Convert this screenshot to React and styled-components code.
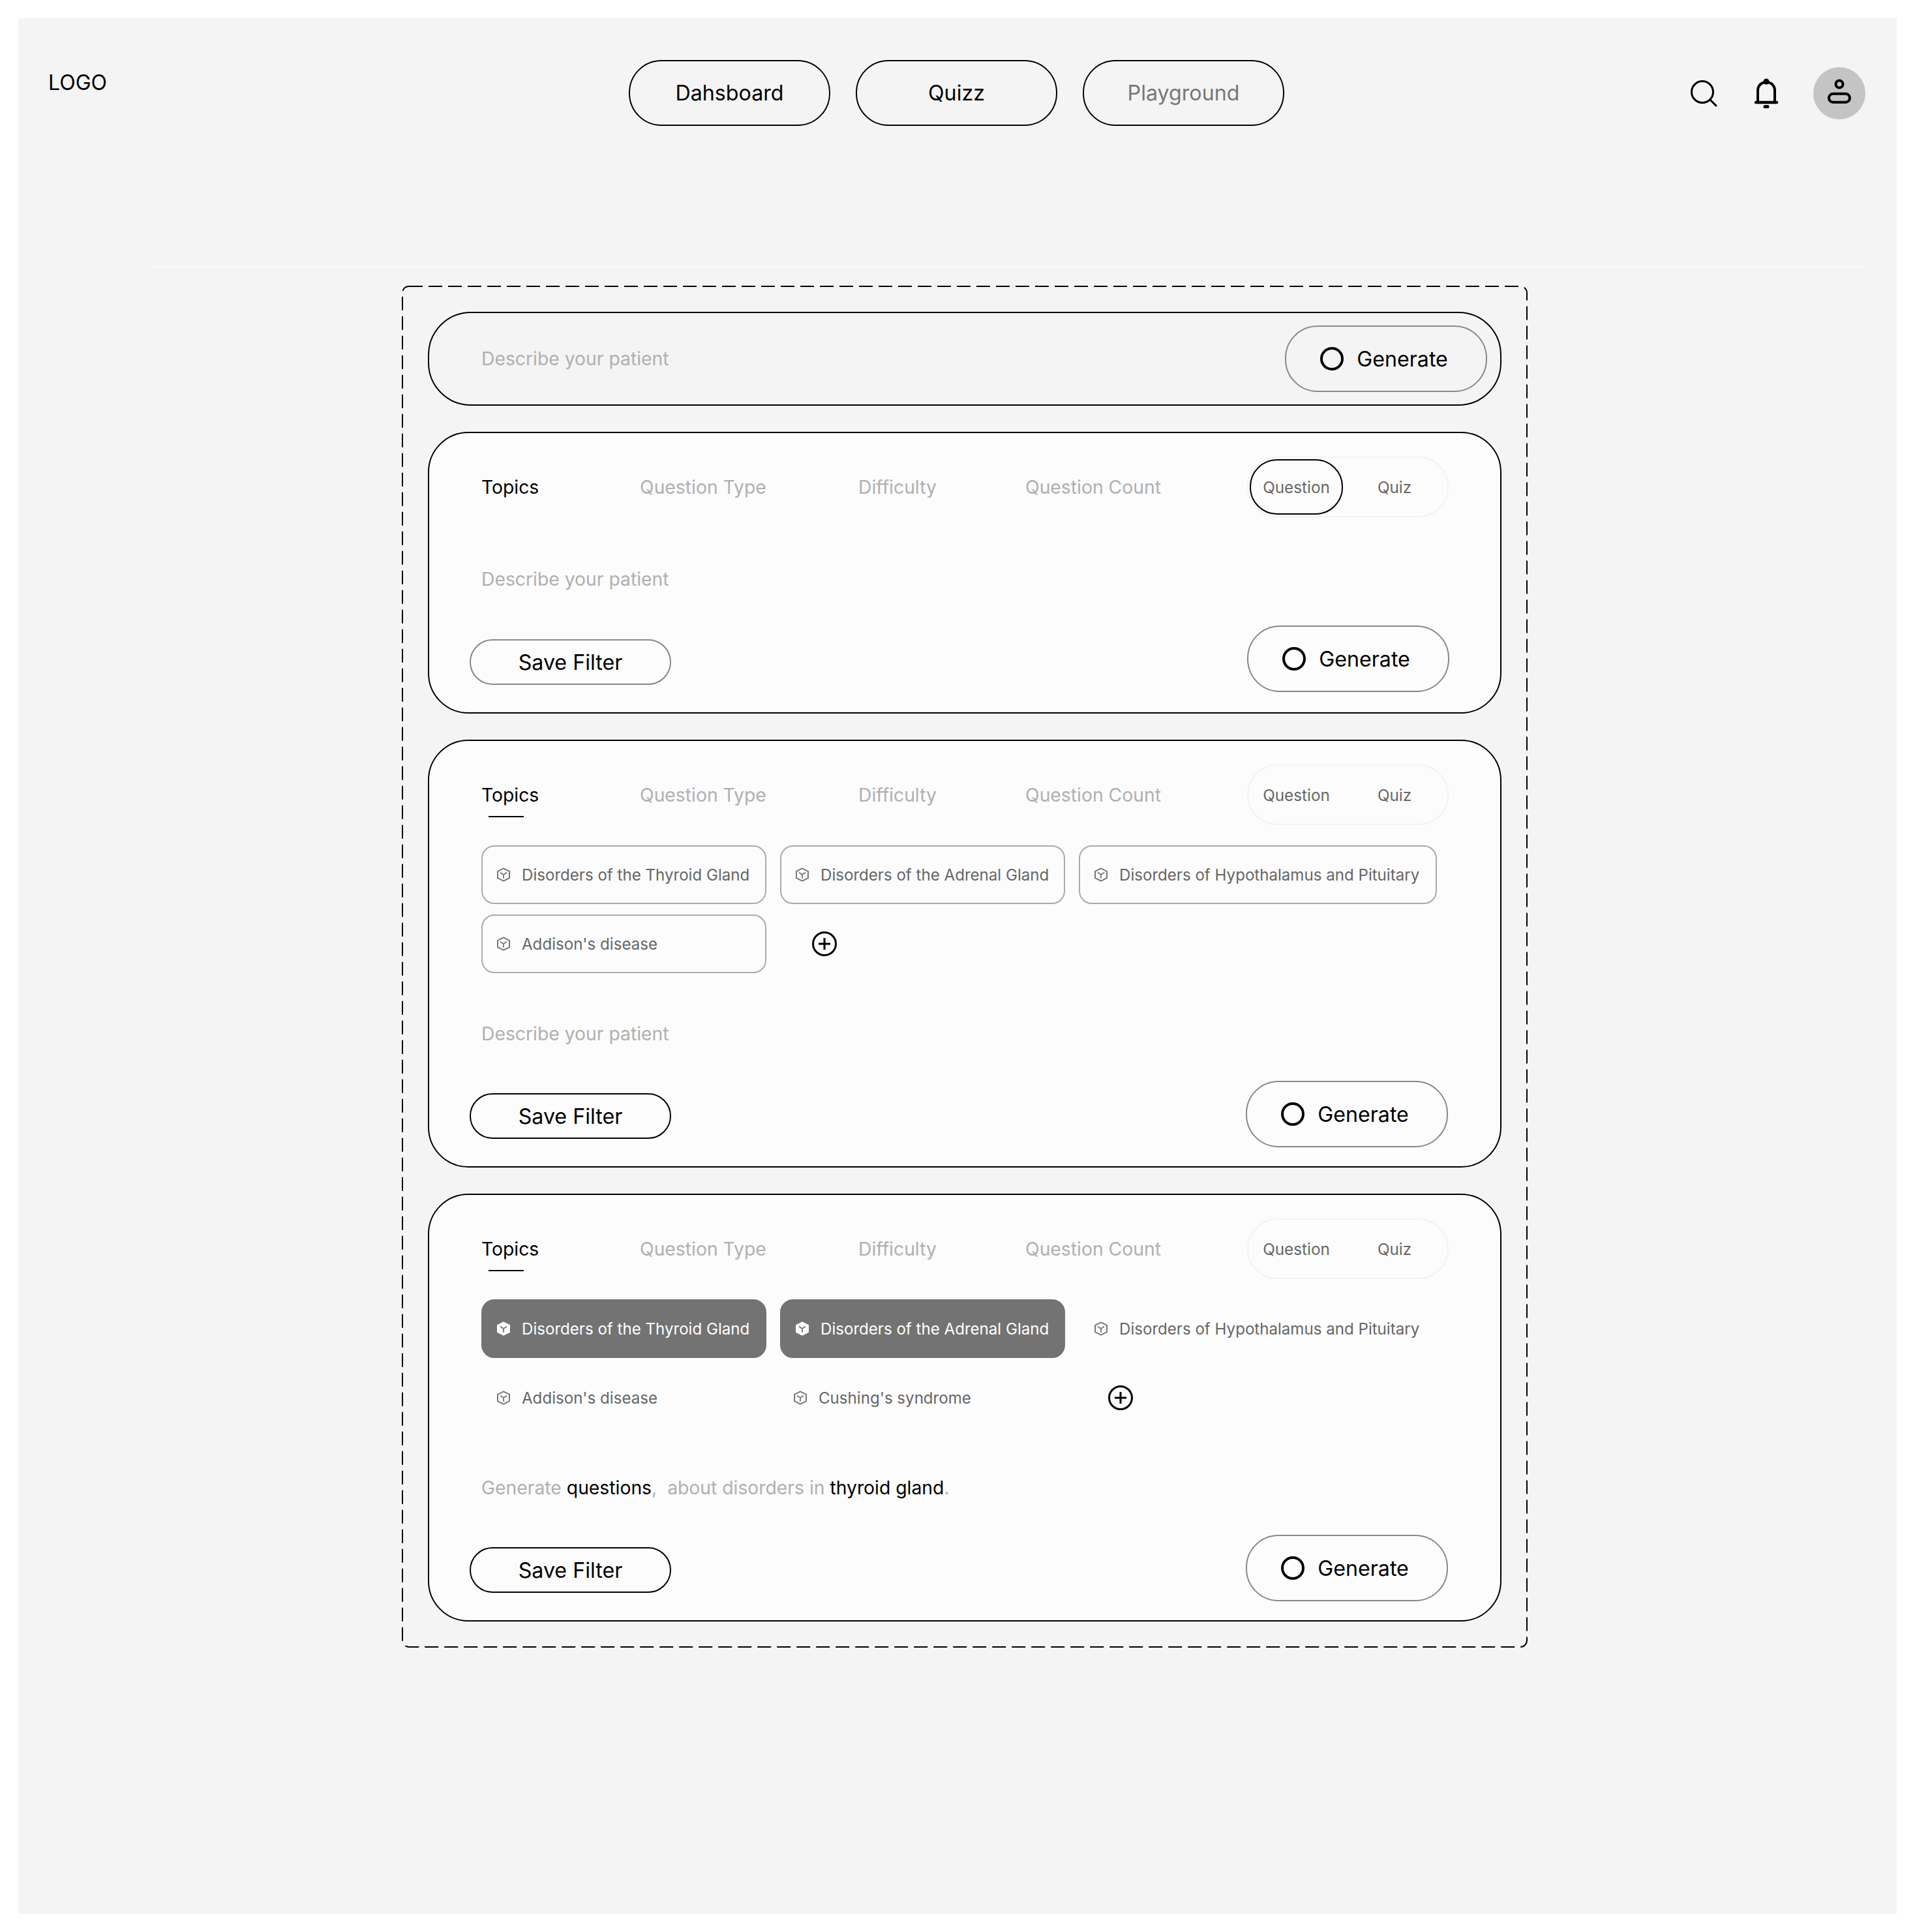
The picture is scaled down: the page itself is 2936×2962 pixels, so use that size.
import React from "react";
import styled, { createGlobalStyle } from "styled-components";

const Global = createGlobalStyle`
  html, body { margin: 0; padding: 0; background: #fff; }
  body { font-family: Inter, "Liberation Sans", sans-serif; color: #000; }
  * { box-sizing: border-box; }
`;

const Page = styled.div`
  padding: 28px;
  width: 2936px;
  height: 2962px;
`;

const Panel = styled.div`
  width: 2880px;
  height: 2906px;
  background: #f4f4f4;
  display: flex;
  flex-direction: column;
`;

const Header = styled.header`
  display: grid;
  grid-template-columns: 890px auto 1fr;
  align-items: start;
  padding: 64px 48px 0 46px;
  height: 380px;
`;

const Logo = styled.div`
  font-size: 32px;
  line-height: 40px;
  margin-top: 15px;
  font-weight: 400;
`;

const Nav = styled.nav`
  display: flex;
  gap: 39px;
`;

const NavPill = styled.div`
  width: 309px;
  height: 101px;
  border: 2px solid #000;
  border-radius: 50px;
  display: flex;
  align-items: center;
  justify-content: center;
  font-size: 32.2px;
  font-weight: 430;
  color: ${(p) => (p.$muted ? "#777" : "#000")};
`;

const HeaderIcons = styled.div`
  display: flex;
  justify-content: flex-end;
  align-items: center;
  height: 101px;
`;

const SearchGlyph = styled.svg`
  width: 42px;
  height: 42px;
  margin-right: 55px;
`;

const BellGlyph = styled.svg`
  width: 40px;
  height: 50px;
  margin-right: 52px;
`;

const Avatar = styled.div`
  width: 80px;
  height: 80px;
  border-radius: 50%;
  background: #c4c4c4;
  display: flex;
  align-items: center;
  justify-content: center;
`;

const Divider = styled.div`
  height: 2px;
  margin: 0 48px 0 204px;
  background: #fcfcfc;
`;

const Frame = styled.section`
  position: relative;
  width: 1726px;
  margin: 28px 0 0 588px;
  padding: 40px;
  display: flex;
  flex-direction: column;
  gap: 40px;
`;

const FrameDash = styled.svg`
  position: absolute;
  inset: 0;
  width: 100%;
  height: 100%;
  pointer-events: none;
  overflow: visible;
`;

const PromptBar = styled.div`
  height: 144px;
  border: 2px solid #000;
  border-radius: 66px;
  display: flex;
  align-items: center;
  justify-content: space-between;
  padding: 0 20px 0 80px;
`;

const Card = styled.div`
  border: 2px solid #000;
  border-radius: 62px;
  background: #fcfcfc;
  padding: 36px 79px ${(p) => p.$bottom}px 62px;
`;

const Tabs = styled.div`
  display: grid;
  grid-template-columns: 243px 335px 256px 340px 308px;
  align-items: center;
  margin-left: 18px;
  height: 93px;
`;

const Tab = styled.div`
  position: relative;
  font-size: 28.3px;
  line-height: 36px;
  font-weight: ${(p) => (p.$active ? 420 : 400)};
  color: ${(p) => (p.$active ? "#000" : "#b0b0b0")};
`;

const TabMark = styled.span`
  position: absolute;
  left: 11px;
  top: 50px;
  width: 54px;
  height: 2px;
  background: #000;
`;

const Toggle = styled.div`
  width: 309px;
  height: 93px;
  border: 2px solid #f3f3f3;
  border-radius: 46px;
  padding: 2px;
  display: grid;
  grid-template-columns: 143px 1fr;
`;

const ToggleOption = styled.div`
  border: 2px solid ${(p) => (p.$on ? "#000" : "transparent")};
  border-radius: 42px;
  display: flex;
  align-items: center;
  justify-content: center;
  font-size: 24.3px;
  color: #666;
`;

const ChipRows = styled.div`
  margin: 31px 0 0 18px;
  display: flex;
  flex-direction: column;
  gap: 16px;
`;

const ChipRow = styled.div`
  display: flex;
  align-items: center;
  gap: 21px;
`;

const Chip = styled.div`
  width: ${(p) => p.$w}px;
  height: 90px;
  border-radius: 20px;
  display: flex;
  align-items: center;
  gap: 16px;
  padding: 0 0 0 ${(p) => p.$left || 20}px;
  font-size: 24.1px;
  white-space: nowrap;
  color: ${(p) => (p.$on ? "#fff" : "#666")};
  background: ${(p) => (p.$on ? "#737373" : p.$ghost ? "#fdfdfd" : "transparent")};
  border: 2px solid ${(p) => (p.$on ? "#737373" : p.$ghost ? "transparent" : "#aaa")};
  svg {
    flex-shrink: 0;
  }
`;

const AddButton = styled.svg`
  width: 40px;
  height: 40px;
  margin-left: 48px;
`;

const Prompt = styled.div`
  margin: ${(p) => p.$top || 0}px 0 0 ${(p) => (p.$flush ? 0 : 18)}px;
  font-size: 28.3px;
  line-height: 36px;
  white-space: pre;
  color: #b0b0b0;
`;

const Strong = styled.span`
  color: #000;
  font-weight: 420;
`;

const Footer = styled.div`
  margin-top: ${(p) => p.$top || 54}px;
  display: flex;
  justify-content: space-between;
  align-items: flex-end;
`;

const SaveButton = styled.div`
  width: 309px;
  height: 70px;
  margin-bottom: ${(p) => (p.$strong ? 13 : 11)}px;
  border: 2px solid ${(p) => (p.$strong ? "#000" : "#888")};
  border-radius: 35px;
  display: flex;
  align-items: center;
  justify-content: center;
  font-size: 32.2px;
  font-weight: 430;
`;

const GenerateButton = styled.div`
  width: 310px;
  height: 102px;
  margin-right: ${(p) => p.$shift || 0}px;
  padding-right: 6px;
  border: 2px solid #888;
  border-radius: 50px;
  display: flex;
  align-items: center;
  justify-content: center;
  gap: 20px;
  font-size: 32.2px;
  font-weight: 430;
`;

const Ring = styled.span`
  width: 36px;
  height: 36px;
  border: 4px solid #000;
  border-radius: 50%;
`;

const CubeIcon = ({ filled }) => (
  <svg width="24" height="24" viewBox="0 0 24 24" fill="none">
    <path
      d="M12 2.4 21 6.8v10.4L12 21.6 3 17.2V6.8z"
      fill={filled ? "#fff" : "none"}
      stroke={filled ? "#fff" : "#777"}
      strokeWidth="2"
      strokeLinejoin="round"
    />
    <path
      d="M7.5 9 12 12l4.5-3M12 12v5"
      stroke={filled ? "#737373" : "#777"}
      strokeWidth="1.8"
      strokeLinecap="round"
      strokeLinejoin="round"
    />
  </svg>
);

const Plus = () => (
  <AddButton viewBox="0 0 40 40" fill="none">
    <circle cx="20" cy="20" r="17.5" stroke="#000" strokeWidth="3" />
    <path d="M20 11v18M11 20h18" stroke="#000" strokeWidth="3" />
  </AddButton>
);

const Generate = ({ shift }) => (
  <GenerateButton $shift={shift}>
    <Ring />
    Generate
  </GenerateButton>
);

const CardTabs = ({ marked, questionOn }) => (
  <Tabs>
    <Tab $active>
      Topics
      {marked && <TabMark />}
    </Tab>
    <Tab>Question Type</Tab>
    <Tab>Difficulty</Tab>
    <Tab>Question Count</Tab>
    <Toggle>
      <ToggleOption $on={questionOn}>Question</ToggleOption>
      <ToggleOption>Quiz</ToggleOption>
    </Toggle>
  </Tabs>
);

const TopicChip = ({ label, ...rest }) => (
  <Chip {...rest}>
    <CubeIcon filled={rest.$on} />
    {label}
  </Chip>
);

export default function App() {
  return (
    <Page>
      <Global />
      <Panel>
        <Header>
          <Logo>LOGO</Logo>
          <Nav>
            <NavPill>Dahsboard</NavPill>
            <NavPill>Quizz</NavPill>
            <NavPill $muted>Playground</NavPill>
          </Nav>
          <HeaderIcons>
            <SearchGlyph viewBox="0 0 42 42" fill="none">
              <circle cx="19" cy="19" r="16.5" stroke="#000" strokeWidth="3" />
              <path d="M31 31l9 9" stroke="#000" strokeWidth="3" strokeLinecap="round" />
            </SearchGlyph>
            <BellGlyph viewBox="0 0 40 50" fill="none">
              <circle cx="20" cy="7" r="4.5" fill="#000" />
              <path
                d="M7 38V21c0-8 5.5-13 13-13s13 5 13 13v17"
                stroke="#000"
                strokeWidth="4"
              />
              <path d="M4 39h32" stroke="#000" strokeWidth="4.5" strokeLinecap="round" />
              <rect x="15.5" y="43" width="9" height="5" rx="2.5" fill="#000" />
            </BellGlyph>
            <Avatar>
              <svg width="40" height="44" viewBox="0 0 40 44" fill="none">
                <circle cx="20" cy="8" r="5.5" stroke="#000" strokeWidth="4" />
                <rect x="4" y="22.7" width="32" height="13" rx="6.5" stroke="#000" strokeWidth="4" />
              </svg>
            </Avatar>
          </HeaderIcons>
        </Header>
        <Divider />
        <Frame>
          <FrameDash>
            <rect
              x="1"
              y="1"
              width="1724"
              height="2086"
              rx="10"
              fill="none"
              stroke="#000"
              strokeWidth="2"
              strokeDasharray="21 9"
            />
          </FrameDash>

          <PromptBar>
            <Prompt $flush>Describe your patient</Prompt>
            <Generate />
          </PromptBar>

          <Card $bottom={31}>
            <CardTabs questionOn />
            <Prompt $top={77}>Describe your patient</Prompt>
            <Footer $top={53}>
              <SaveButton>Save Filter</SaveButton>
              <Generate shift={-1} />
            </Footer>
          </Card>

          <Card $bottom={29}>
            <CardTabs marked />
            <ChipRows>
              <ChipRow>
                <TopicChip $w={437} label="Disorders of the Thyroid Gland" />
                <TopicChip $w={437} label="Disorders of the Adrenal Gland" />
                <TopicChip $w={549} label="Disorders of Hypothalamus and Pituitary" />
              </ChipRow>
              <ChipRow>
                <TopicChip $w={437} label="Addison's disease" />
                <Plus />
              </ChipRow>
            </ChipRows>
            <Prompt $top={75}>Describe your patient</Prompt>
            <Footer>
              <SaveButton $strong>Save Filter</SaveButton>
              <Generate shift={1} />
            </Footer>
          </Card>

          <Card $bottom={29}>
            <CardTabs marked />
            <ChipRows>
              <ChipRow>
                <TopicChip $on $w={437} label="Disorders of the Thyroid Gland" />
                <TopicChip $on $w={437} label="Disorders of the Adrenal Gland" />
                <TopicChip $ghost $w={549} label="Disorders of Hypothalamus and Pituitary" />
              </ChipRow>
              <ChipRow>
                <TopicChip $ghost $w={437} label="Addison's disease" />
                <TopicChip $ghost $w={433} $left={17} label="Cushing's syndrome" />
                <Plus />
              </ChipRow>
            </ChipRows>
            <Prompt $top={75}>
              Generate <Strong>questions</Strong>,{"  "}about disorders in <Strong>thyroid gland</Strong>.
            </Prompt>
            <Footer>
              <SaveButton $strong>Save Filter</SaveButton>
              <Generate shift={1} />
            </Footer>
          </Card>
        </Frame>
      </Panel>
    </Page>
  );
}
